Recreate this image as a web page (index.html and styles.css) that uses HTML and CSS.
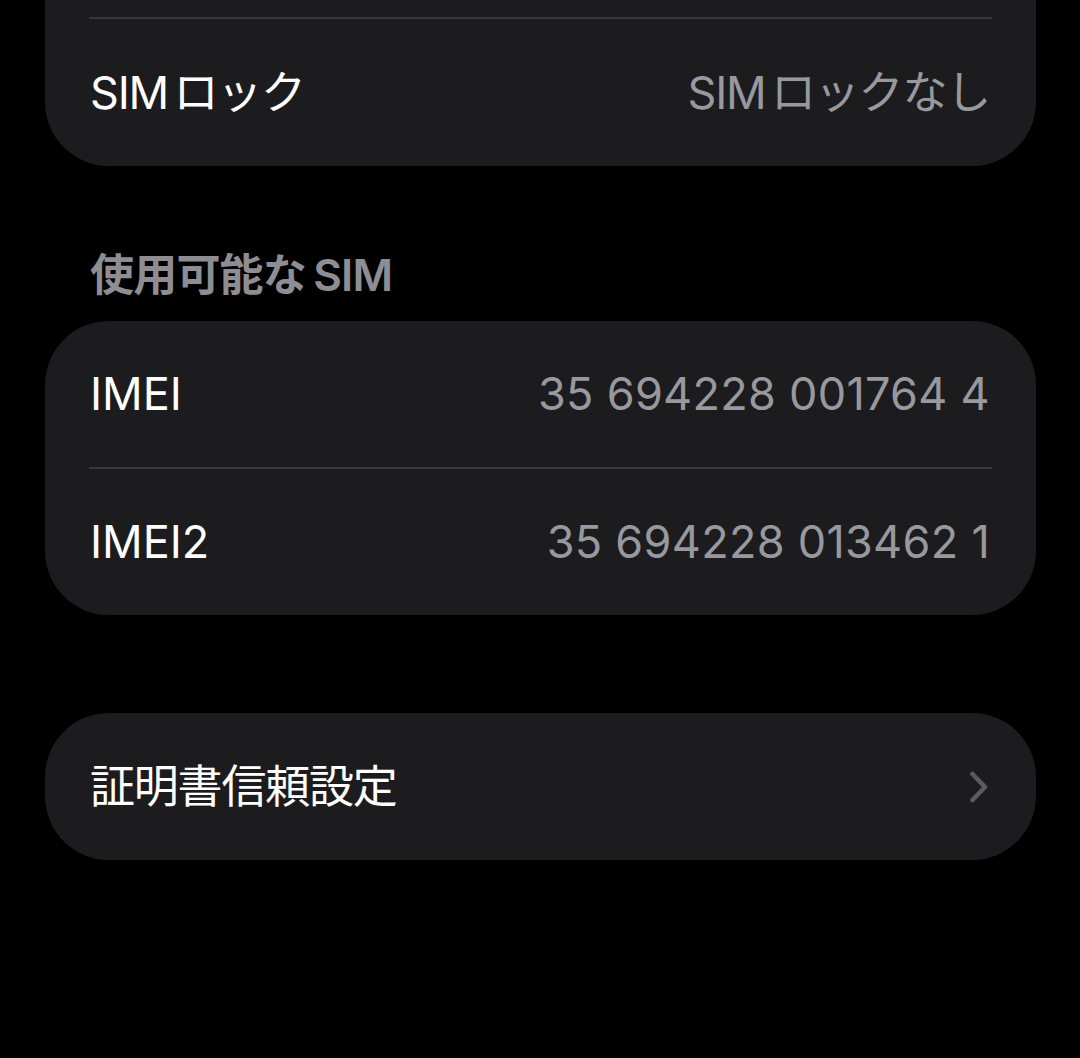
FILE: index.html
```html
<!DOCTYPE html>
<html lang="ja">
<head>
<meta charset="utf-8">
<title>情報</title>
<link rel="stylesheet" href="styles.css">
</head>
<body>
<main class="page">
  <section class="card card-top">
    <div class="card-cut"></div>
    <div class="sep"></div>
    <div class="row">
      <span class="label ja">SIM ロック</span>
      <span class="value ja">SIM ロックなし</span>
    </div>
  </section>

  <h2 class="section-header">使用可能な SIM</h2>

  <section class="card">
    <div class="row">
      <span class="label">IMEI</span>
      <span class="value num">35 694228 001764 4</span>
    </div>
    <div class="sep"></div>
    <div class="row">
      <span class="label">IMEI2</span>
      <span class="value num">35 694228 013462 1</span>
    </div>
  </section>

  <section class="card card-link">
    <div class="row">
      <span class="label ja">証明書信頼設定</span>
      <svg class="chevron" width="20" height="32" viewBox="0 0 20 32" aria-hidden="true">
        <path d="M3.5 3 L16 16 L3.5 29" fill="none" stroke="#5a5a5f" stroke-width="4.6" stroke-linecap="round" stroke-linejoin="round"/>
      </svg>
    </div>
  </section>
</main>
</body>
</html>
```

FILE: styles.css
```css
html, body {
  margin: 0;
  padding: 0;
  background: #000000;
}

body {
  font-family: "Inter", "Noto Sans CJK JP", sans-serif;
  color: #ffffff;
  -webkit-font-smoothing: antialiased;
}

.page {
  display: flex;
  flex-direction: column;
  padding: 0 44px 0 45px;
}

.card {
  background: #1c1c1e;
  border-radius: 64px;
  display: flex;
  flex-direction: column;
  overflow: hidden;
}

.card-top {
  border-top-left-radius: 0;
  border-top-right-radius: 0;
}

.card-cut {
  height: 17px;
}

.sep {
  height: 2px;
  margin: 0 44px;
  background: #38383a;
}

.row {
  height: 146px;
  padding: 0 46px 0 45px;
  display: flex;
  align-items: center;
  justify-content: space-between;
  font-size: 45px;
  line-height: 60px;
}

.card-top .row {
  height: 147px;
}

.label {
  color: #ffffff;
}

.value {
  color: #98989f;
}

.ja {
  letter-spacing: -1.2px;
  word-spacing: -6px;
}

.num {
  letter-spacing: 0.3px;
}

.section-header {
  margin: 79px 0 16px 0;
  padding: 0 45px;
  font-size: 44px;
  line-height: 60px;
  font-weight: 600;
  letter-spacing: -0.8px;
  word-spacing: -3px;
  color: #8d8d93;
}

.card-link {
  margin-top: 98px;
}

.card-link .row {
  height: 147px;
}

.chevron {
  display: block;
  margin-right: 1px;
}
```
